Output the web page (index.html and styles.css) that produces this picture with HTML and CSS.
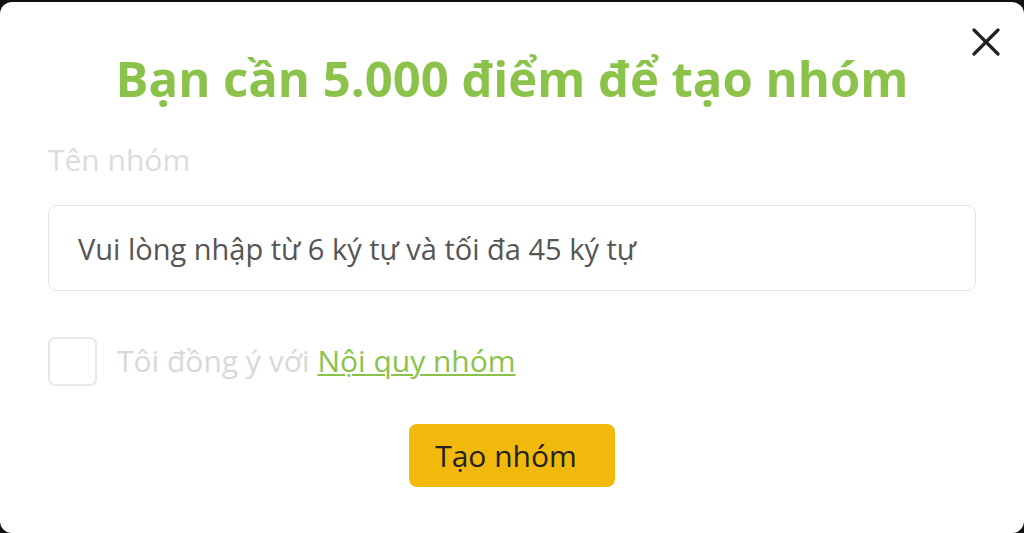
FILE: index.html
```html
<!DOCTYPE html>
<html lang="vi">
<head>
<meta charset="utf-8">
<link rel="stylesheet" href="styles.css">
</head>
<body>
<div class="modal">
  <button class="close" aria-label="Đóng">
    <svg width="28" height="28" viewBox="0 0 28 28"><path d="M2 2 L26 26 M26 2 L2 26" stroke="#222" stroke-width="3.2" stroke-linecap="round"/></svg>
  </button>
  <h1 class="title">Bạn cần 5.000 điểm để tạo nhóm</h1>
  <div class="label">Tên nhóm</div>
  <div class="input">Vui lòng nhập từ 6 ký tự và tối đa 45 ký tự</div>
  <div class="agree">
    <span class="check"></span>
    <span class="agree-text">Tôi đồng ý với <a class="rule" href="#">Nội quy nhóm</a></span>
  </div>
  <div class="actions">
    <button class="submit">Tạo nhóm</button>
  </div>
</div>
</body>
</html>
```
FILE: styles.css
```css
html, body {
  margin: 0;
  padding: 0;
  background: #111;
  height: 100%;
}
body {
  font-family: "Open Sans", "Noto Sans", sans-serif;
  padding-top: 2px;
  box-sizing: border-box;
}
.modal {
  position: relative;
  background: #fff;
  height: 531px;
  border-radius: 12px;
  padding: 0 48px;
  box-sizing: border-box;
  display: flex;
  flex-direction: column;
}
.close {
  position: absolute;
  top: 26px;
  right: 24px;
  border: 0;
  background: none;
  padding: 0;
  width: 28px;
  height: 28px;
}
.title {
  margin: 46px 0 0;
  text-align: center;
  color: #8bc34a;
  font-size: 49px;
  font-weight: 700;
  line-height: 60px;
}
.label {
  margin-top: 32px;
  color: #dcdcdc;
  font-size: 30px;
  line-height: 40px;
}
.input {
  margin-top: 25px;
  height: 86px;
  box-sizing: border-box;
  border: 1px solid #e6e6e6;
  border-radius: 8px;
  padding: 0 29px;
  display: flex;
  align-items: center;
  color: #555;
  font-size: 29px;
}
.agree {
  margin-top: 46px;
  display: flex;
  align-items: center;
  gap: 20px;
  height: 48px;
}
.check {
  width: 49px;
  height: 49px;
  box-sizing: border-box;
  border: 2px solid #e8e8e8;
  border-radius: 7px;
}
.agree-text {
  color: #d8d8d8;
  font-size: 30px;
  line-height: 40px;
}
.rule {
  color: #8bc34a;
  text-decoration: underline;
  text-decoration-thickness: 2px;
  text-underline-offset: 2px;
}
.actions {
  margin-top: 39px;
  display: flex;
  justify-content: center;
}
.submit {
  width: 206px;
  height: 63px;
  border: 0;
  border-radius: 8px;
  background: #f0b90b;
  color: #222;
  font-family: "Open Sans", "Noto Sans", sans-serif;
  font-size: 30px;
  padding: 0 12px 0 0;
}
```
